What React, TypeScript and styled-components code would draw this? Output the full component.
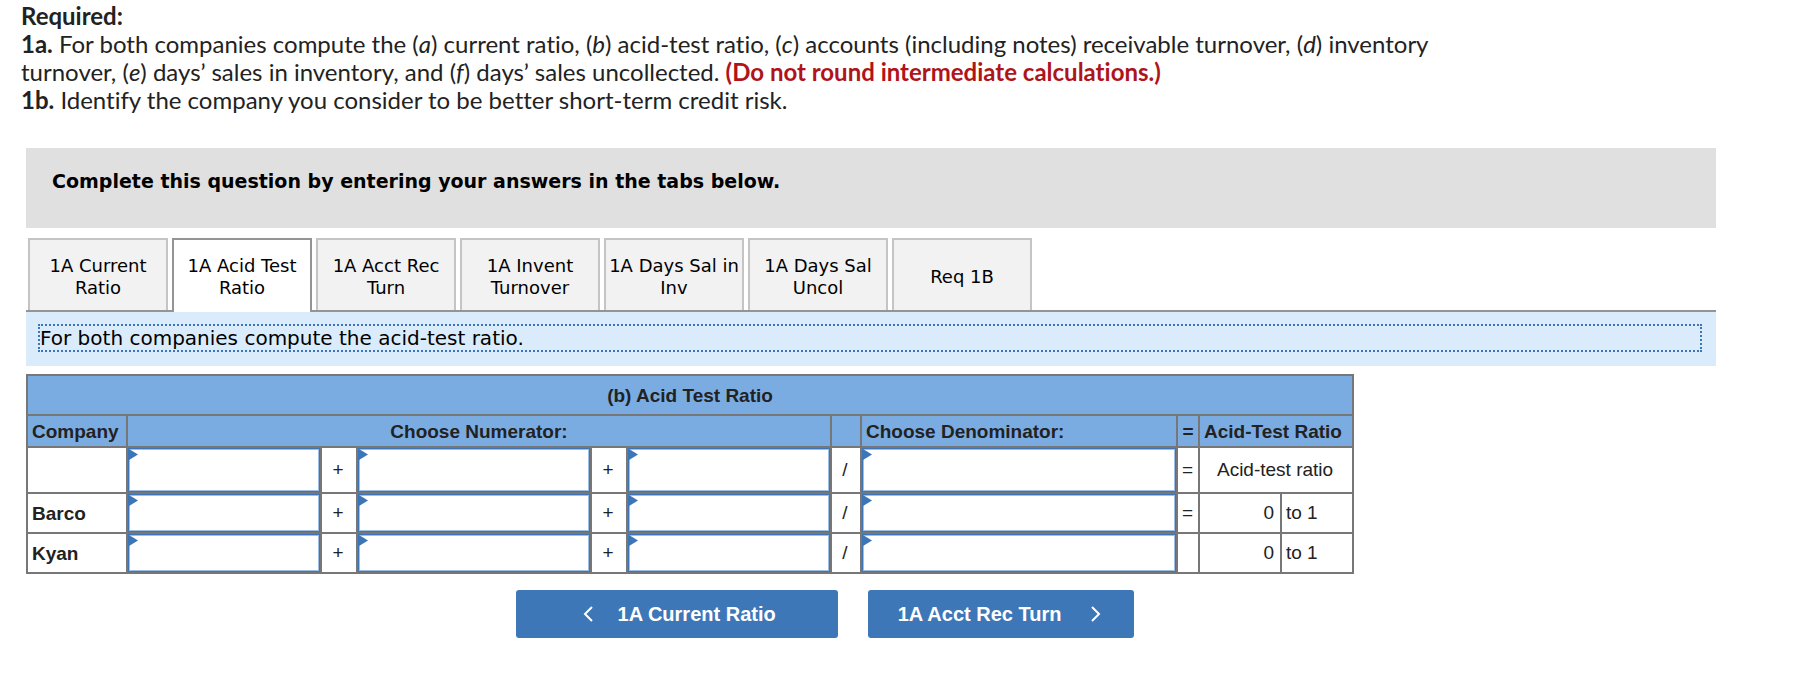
import React, { useState } from 'react';
import styled, { createGlobalStyle } from 'styled-components';

const GlobalStyle = createGlobalStyle`
  *, *::before { box-sizing: border-box; }
  body {
    margin: 0;
    background: #fff;
    color: #222;
    font-family: "Liberation Sans", Arial, sans-serif;
    font-size: 19px;
  }
`;

const Page = styled.main`
  padding: 2px 82px 40px 21px;
`;

const Requirements = styled.section`
  font-family: Lato, sans-serif;
  font-size: 24px;
  font-variant-ligatures: none;
  line-height: 28px;

  p { margin: 0; }
`;

const Warning = styled.strong`
  color: #b0141b;
`;

const Question = styled.section`
  margin: 34px 0 0 5px;
`;

const Banner = styled.h2`
  margin: 0;
  padding: 21px 26px 35px;
  background: #e0e0e0;
  color: #000;
  font: bold 19px/24px "DejaVu Sans", Verdana, sans-serif;
`;

const TabList = styled.div`
  display: flex;
  gap: 4px;
  margin-top: 10px;
  padding-left: 2px;
  border-bottom: 2px solid #949494;
`;

const Tab = styled.button<{ $active: boolean }>`
  width: 140px;
  height: ${p => (p.$active ? 74 : 72)}px;
  margin-bottom: ${p => (p.$active ? -2 : 0)}px;
  padding: ${p => (p.$active ? 2 : 4)}px 0 0;
  border: 2px solid ${p => (p.$active ? '#949494' : '#c4c4c4')};
  border-bottom: 0;
  background: ${p => (p.$active ? '#fff' : '#f2f2f2')};
  color: #000;
  font: 18px/22px "DejaVu Sans", Verdana, sans-serif;
  cursor: pointer;
`;

const Panel = styled.div`
  padding: 12px 14px 14px 12px;
  background: #daecfb;
`;

const Instruction = styled.p`
  margin: 0;
  border: 2px dotted #3d76b8;
  color: #000;
  font: 20px/24px "DejaVu Sans", Verdana, sans-serif;
`;

const Worksheet = styled.table`
  width: 1326px;
  margin-top: 8px;
  border-collapse: collapse;
  table-layout: fixed;
  line-height: 22px;
`;

const Col = styled.col<{ $w: number }>`
  width: ${p => p.$w}px;
`;

const Row = styled.tr<{ $h: number }>`
  height: ${p => p.$h}px;
`;

const Head = styled.th<{ $align?: string }>`
  padding: 2px 4px 0;
  border: 2px solid #777;
  background: #7aace2;
  text-align: ${p => p.$align ?? 'center'};
  white-space: nowrap;
`;

const Company = styled.th`
  padding: 2px 4px 0;
  border: 2px solid #777;
  text-align: left;
`;

const Cell = styled.td<{ $align?: string }>`
  padding: 0 6px 0 4px;
  border: 2px solid #777;
  text-align: ${p => p.$align ?? 'center'};
  white-space: nowrap;
`;

const EntryCell = styled.td`
  position: relative;
  padding: 0;
  border: 2px solid #777;

  &::before {
    content: "";
    position: absolute;
    top: 1px;
    left: 1px;
    width: 9px;
    height: 11px;
    background: #3d76b8;
    clip-path: polygon(0 0, 100% 50%, 0 100%);
    pointer-events: none;
  }
`;

const Entry = styled.input<{ $h: number }>`
  display: block;
  width: 100%;
  height: ${p => p.$h}px;
  padding: 0 12px;
  border: 1px solid #3d76b8;
  border-radius: 0;
  outline: 0;
  box-shadow: inset 0 0 0 1px #9dbfe6;
  background: #fff;
  color: #222;
  font: inherit;
`;

const Pager = styled.nav`
  display: flex;
  justify-content: center;
  gap: 30px;
  margin-top: 16px;
  padding-right: 92px;
`;

const PagerButton = styled.button<{ $wide?: boolean }>`
  display: flex;
  align-items: center;
  gap: ${p => (p.$wide ? 25 : 30)}px;
  height: 48px;
  padding: ${p => (p.$wide ? '0 62px 0 67px' : '0 33px 0 30px')};
  border: 0;
  border-radius: 3px;
  background: #3d77b8;
  color: #fff;
  font: bold 20px/24px "Liberation Sans", Arial, sans-serif;
  white-space: nowrap;
  cursor: pointer;
`;

function Chevron({ d }: { d: string }) {
  return (
    <svg width="10" height="16" viewBox="0 0 10 16" fill="none" stroke="#fff" strokeWidth="2" aria-hidden="true">
      <path d={d} />
    </svg>
  );
}

const tabs = ['1A Current Ratio', '1A Acid Test Ratio', '1A Acct Rec Turn', '1A Invent Turnover', '1A Days Sal in Inv', '1A Days Sal Uncol', 'Req 1B'];
const columns = [100, 194, 36, 234, 36, 204, 30, 316, 22, 82, 72];
const rows = [
  { company: '', height: 46, equals: '=' },
  { company: 'Barco', height: 40, equals: '=', value: '0' },
  { company: 'Kyan', height: 40, equals: '', value: '0' },
];

function EntryField({ label, height }: { label: string; height: number }) {
  return (
    <EntryCell>
      <Entry type="text" aria-label={label} $h={height - 2} />
    </EntryCell>
  );
}

export default function App() {
  const [active, setActive] = useState(1);
  return (
    <Page>
      <GlobalStyle />
      <Requirements>
        <p><strong>Required:</strong></p>
        <p>
          <strong>1a.</strong> For both companies compute the (<em>a</em>) current ratio, (<em>b</em>) acid-test ratio, (<em>c</em>) accounts
          (including notes) receivable turnover, (<em>d</em>) inventory
          <br />
          turnover, (<em>e</em>) days’ sales in inventory, and (<em>f</em>) days’
          sales uncollected. <Warning>(Do not round intermediate calculations.)</Warning>
        </p>
        <p><strong>1b.</strong> Identify the company you consider to be better short-term credit risk.</p>
      </Requirements>

      <Question>
        <Banner>Complete this question by entering your answers in the tabs below.</Banner>
        <TabList role="tablist">
          {tabs.map((label, i) => (
            <Tab key={label} type="button" role="tab" aria-selected={i === active} $active={i === active} onClick={() => setActive(i)}>
              {label}
            </Tab>
          ))}
        </TabList>
        <Panel>
          <Instruction>For both companies compute the acid-test ratio.</Instruction>
        </Panel>

        <Worksheet>
          <colgroup>
            {columns.map((w, i) => <Col key={i} $w={w} />)}
          </colgroup>
          <thead>
            <Row $h={40}>
              <Head colSpan={11}>(b) Acid Test Ratio</Head>
            </Row>
            <Row $h={32}>
              <Head $align="left">Company</Head>
              <Head colSpan={5}>Choose Numerator:</Head>
              <Head />
              <Head $align="left">Choose Denominator:</Head>
              <Head>=</Head>
              <Head colSpan={2} $align="left">Acid-Test Ratio</Head>
            </Row>
          </thead>
          <tbody>
            {rows.map(({ company, height, equals, value }) => {
              const name = company || 'Formula';
              return (
                <Row key={name} $h={height}>
                  <Company scope="row">{company}</Company>
                  <EntryField label={`${name} numerator 1`} height={height} />
                  <Cell>+</Cell>
                  <EntryField label={`${name} numerator 2`} height={height} />
                  <Cell>+</Cell>
                  <EntryField label={`${name} numerator 3`} height={height} />
                  <Cell>/</Cell>
                  <EntryField label={`${name} denominator`} height={height} />
                  <Cell>{equals}</Cell>
                  {value === undefined ? (
                    <Cell colSpan={2}>Acid-test ratio</Cell>
                  ) : (
                    <>
                      <Cell $align="right">{value}</Cell>
                      <Cell $align="left">to 1</Cell>
                    </>
                  )}
                </Row>
              );
            })}
          </tbody>
        </Worksheet>

        <Pager aria-label="Question parts">
          <PagerButton type="button" $wide onClick={() => setActive(0)}>
            <Chevron d="M9 1 2 8l7 7" />
            1A Current Ratio
          </PagerButton>
          <PagerButton type="button" onClick={() => setActive(2)}>
            1A Acct Rec Turn
            <Chevron d="m1 1 7 7-7 7" />
          </PagerButton>
        </Pager>
      </Question>
    </Page>
  );
}
